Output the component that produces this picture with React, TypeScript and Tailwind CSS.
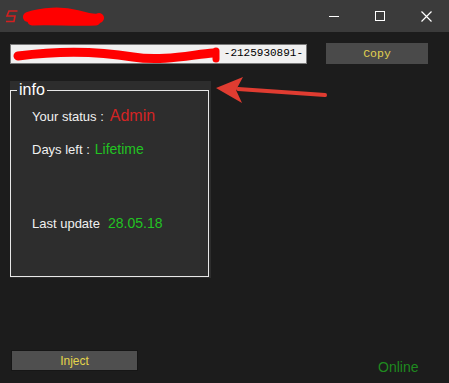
import React from "react";

export default function App() {
  return (
    <div className="w-[449px] h-[383px] bg-[#1c1c1c] relative overflow-hidden" style={{ fontFamily: "Arial, 'Liberation Sans', sans-serif" }}>
      {/* Title bar */}
      <div className="h-[32px] bg-[#3b3b3b] flex items-center relative">
        <svg className="absolute left-[5px] top-[10px]" width="14" height="13" viewBox="0 0 14 13">
          <path d="M12.5 1 H4 L2 6 H10 L9 11.5 H1" stroke="#d42020" strokeWidth="1.6" fill="none" strokeLinejoin="miter" />
        </svg>
        <svg className="absolute left-[22px] top-[7px]" width="84" height="22" viewBox="0 0 84 22">
          <path d="M6 10 C 20 5, 40 4, 55 8 S 75 12, 77 11" stroke="#ff0000" strokeWidth="10" strokeLinecap="round" fill="none" />
          <path d="M10 14 C 30 13, 50 15, 74 14" stroke="#ff0000" strokeWidth="9" strokeLinecap="round" fill="none" />
        </svg>
        <div className="ml-auto flex items-center h-full">
          <div className="w-[46px] h-full flex items-center justify-center">
            <div className="w-[10px] h-[1px] bg-white" />
          </div>
          <div className="w-[46px] h-full flex items-center justify-center">
            <div className="w-[10px] h-[10px] border border-white" />
          </div>
          <div className="w-[46px] h-full flex items-center justify-center">
            <svg width="11" height="11" viewBox="0 0 11 11">
              <path d="M0.5 0.5 L10.5 10.5 M10.5 0.5 L0.5 10.5" stroke="white" strokeWidth="1.2" />
            </svg>
          </div>
        </div>
      </div>

      {/* Key row */}
      <div className="flex items-center mt-[11px] pl-[10px]">
        <div className="relative w-[297px] h-[20px] bg-[#f0f0f0] border border-[#7a7a7a] flex items-center justify-end pr-[3px]">
          <svg className="absolute left-[2px] top-[1px]" width="210" height="18" viewBox="0 0 210 18">
            <path d="M5 10 C 50 4, 90 6, 120 11 S 182 8, 200 7" stroke="#ff0000" strokeWidth="9" strokeLinecap="round" fill="none" />
            <path d="M203 5 L203 13" stroke="#ff0000" strokeWidth="7" strokeLinecap="round" />
          </svg>
          <span className="text-[11px] text-black leading-none" style={{ fontFamily: "'Liberation Mono', 'Courier New', monospace" }}>-2125930891-</span>
        </div>
        <div className="ml-[19px] w-[102px] h-[21px] bg-[#4a4a4a] flex items-center justify-center">
          <span className="text-[11.5px] text-[#e0d050] leading-none" style={{ fontFamily: "'Liberation Mono', 'Courier New', monospace" }}>Copy</span>
        </div>
      </div>

      {/* Arrow */}
      <svg className="absolute left-[214px] top-[74px]" width="116" height="32" viewBox="0 0 116 32">
        <path d="M24 15 L111 21" stroke="#e03c31" strokeWidth="4" strokeLinecap="round" />
        <polygon points="2,14 29,3 22,16 28,29" fill="#e03c31" />
      </svg>

      {/* Info group */}
      <div className="absolute left-[10px] top-[81px] w-[201px] h-[197px] bg-[#2d2d2d]">
        <div className="absolute left-[0px] top-[9px] w-[199px] h-[187px] border border-[#e8e8e8]" />
        <div className="absolute left-[7px] top-[0px] bg-[#2d2d2d] px-[2px] text-[16px] text-white leading-[18px]">info</div>
        <div className="absolute left-[22px] top-[23px] flex items-baseline">
          <span className="text-[13px] text-[#f0f0f0]">Your status :</span>
          <span className="ml-[6px] text-[16px] text-[#d42424]">Admin</span>
        </div>
        <div className="absolute left-[22px] top-[58px] flex items-baseline">
          <span className="text-[13px] text-[#f0f0f0]">Days left :</span>
          <span className="ml-[5px] text-[14px] text-[#22c322]">Lifetime</span>
        </div>
        <div className="absolute left-[22px] top-[132px] flex items-baseline">
          <span className="text-[13px] text-[#f0f0f0]">Last update</span>
          <span className="ml-[8px] text-[14px] text-[#22c322]">28.05.18</span>
        </div>
      </div>

      {/* Bottom */}
      <div className="absolute left-[11px] top-[350px] w-[127px] h-[21px] bg-[#4f4f4f] border border-[#161616] flex items-center justify-center">
        <span className="text-[12px] text-[#e4d44a] leading-none">Inject</span>
      </div>
      <div className="absolute left-[378px] top-[358px] text-[14px] text-[#1f8a1f] leading-[18px]">Online</div>
    </div>
  );
}
